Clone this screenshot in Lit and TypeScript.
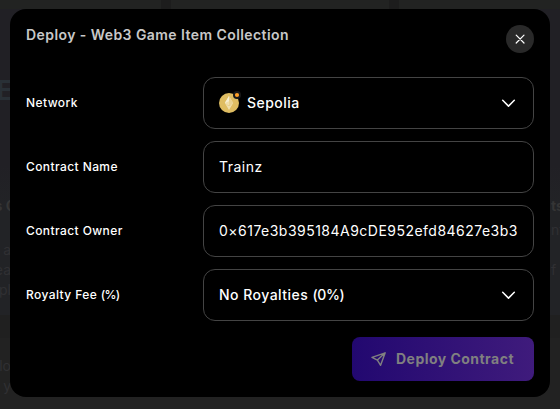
import { LitElement, html, css, svg } from "lit";
import { customElement, property } from "lit/decorators.js";

const chevron = svg`<svg width="20" height="20" viewBox="0 0 20 20" fill="none" stroke="#fff" stroke-width="1.5" stroke-linecap="round" stroke-linejoin="round"><path d="M4.7 7.3 10.5 13.1l5.8-5.8"/></svg>`;

/* Sets a trailing "(…)" note slightly tighter than the words before it. */
const withNote = (text: string) => {
  const at = text.indexOf("(");
  return at < 0 ? text : html`${text.slice(0, at)}<span class="note">${text.slice(at)}</span>`;
};

@customElement("form-row")
class FormRow extends LitElement {
  @property() label = "";
  @property() value = "";
  @property() kind = "text";

  static styles = css`
    :host { display: flex; align-items: center; height: 52px; }
    .label { width: 177px; flex: none; font-size: 12px; line-height: 16px; font-weight: 500; letter-spacing: 0.41px; color: #fff; }
    .field {
      flex: 1; min-width: 0; box-sizing: border-box; height: 52px; padding: 0 14px 0 15px;
      border: 1px solid #444; border-radius: 12px;
      display: flex; align-items: center; gap: 8px; color: #fff;
      font-size: 14px; letter-spacing: 0.48px;
    }
    .value { flex: 1; min-width: 0; overflow: hidden; white-space: nowrap; line-height: 20px; }
    .picker { font-weight: 500; padding-right: 15px; }
    .note { letter-spacing: -0.4px; }
    .label .note { letter-spacing: -0.7px; }
    svg { display: block; flex: none; }
  `;

  render() {
    const select = this.kind !== "text";
    return html`
      <span class="label">${withNote(this.label)}</span>
      <div class="field ${select ? "picker" : ""}">
        <slot name="icon"></slot>
        <span class="value">${withNote(this.value)}</span>
        ${select ? chevron : ""}
      </div>`;
  }
}

@customElement("app-root")
class AppRoot extends LitElement {
  static styles = css`
    :host {
      display: block; position: relative; width: 560px; height: 409px; overflow: hidden;
      box-sizing: border-box; padding: 9px 10px 12px;
      background: #222; font-family: Inter, sans-serif;
    }
    .backdrop { position: absolute; inset: 0; background: linear-gradient(#222322 0 9px, #212025 9px 165px, #222326 205px 315px, #202020 315px 338px, #222 338px); }
    .band { position: absolute; top: 0; width: 10px; height: 9px; background: #1d1d1d; }
    .band-a { left: 161px; }
    .band-b { left: 389px; }
    .ghost { position: absolute; white-space: nowrap; line-height: 20px; font-size: 14px; color: #303033; }
    .left { right: 549px; }
    .right { left: 551px; }
    .big { right: 547px; font-size: 27px; font-weight: 600; color: #293036; line-height: 30px; }
    .bold { font-weight: 700; color: #353535; }
    .left.bold { right: 544px; }
    .modal {
      position: relative; box-sizing: border-box; height: 388px; padding: 16px;
      background: #000; border-radius: 16px; display: flex; flex-direction: column;
    }
    .head { display: flex; justify-content: space-between; height: 28px; margin-bottom: 24px; }
    .title { margin: 0; font-size: 14px; line-height: 20px; font-weight: 600; letter-spacing: 0.43px; color: #c8c8c8; }
    .close {
      width: 28px; height: 28px; padding: 0; border: 0; border-radius: 50%;
      background: #292929; display: grid; place-items: center;
    }
    .rows { display: flex; flex-direction: column; gap: 12px; }
    .deploy {
      align-self: flex-end; margin-top: 16px; width: 182px; height: 44px; flex: none;
      border: 0; border-radius: 8px; padding: 0 0 0 19px;
      display: flex; align-items: center; gap: 9px;
      background: linear-gradient(90deg, #220870, #3f1b7c); color: #808080;
      font: 700 14px/20px Inter, sans-serif; letter-spacing: 0.47px;
    }
    svg { display: block; flex: none; }
    .coin { width: 20px; height: 20px; overflow: visible; }
  `;

  render() {
    return html`
      <div class="backdrop">
        <div class="band band-a"></div>
        <div class="band band-b"></div>
        <span class="ghost left big" style="top:76px">E</span>
        <span class="ghost left bold" style="top:196px">s C</span>
        <span class="ghost left" style="top:240px">a</span>
        <span class="ghost left" style="top:260px">ea</span>
        <span class="ghost left" style="top:280px">pl</span>
        <span class="ghost left" style="top:356px">lo</span>
        <span class="ghost left" style="top:376px">y</span>
        <span class="ghost right bold" style="top:196px">ts</span>
        <span class="ghost right" style="top:220px">nt</span>
        <span class="ghost right" style="top:260px">f</span>
      </div>
      <section class="modal">
        <header class="head">
          <h2 class="title">Deploy - Web3 Game Item Collection</h2>
          <button class="close" aria-label="Close">
            <svg width="10" height="10" viewBox="0 0 10 10" stroke="#fff" stroke-width="1.2" stroke-linecap="round"><path d="m1.2 1.2 7.8 7.8M9 1.2 1.2 9"/></svg>
          </button>
        </header>
        <div class="rows">
          <form-row label="Network" value="Sepolia" kind="select">
            <svg slot="icon" class="coin" viewBox="0 0 20 20">
              <circle cx="10" cy="10" r="10" fill="#dfbd62"/>
              <path d="M10 3 5.8 10.1 10 17l4.2-6.9z" fill="#f0dfad"/>
              <path d="M10 3v9.4l4.2-2.3z" fill="#e9d291"/>
              <path d="M10 3 5.8 10.1 10 8.3z" fill="#f8efd2"/>
              <path d="m5.8 10.8 4.2 2.3 4.2-2.3L10 12.4z" fill="#dfbd62"/>
              <circle cx="18" cy="2" r="4" fill="#191919"/>
              <circle cx="18" cy="2" r="2.1" fill="#ff9f27"/>
            </svg>
          </form-row>
          <form-row label="Contract Name" value="Trainz"></form-row>
          <form-row label="Contract Owner" value="0×617e3b395184A9cDE952efd84627e3b3"></form-row>
          <form-row label="Royalty Fee (%)" value="No Royalties (0%)" kind="select"></form-row>
        </div>
        <button class="deploy">
          <svg width="16" height="16" viewBox="0 0 16 16" fill="none" stroke="#808080" stroke-width="1.4" stroke-linejoin="round"><path d="M14.2 1.8 1 6.4l5.4 2.7 3.2 5.2zM14.2 1.8 6.4 9.1"/></svg>
          <span>Deploy Contract</span>
        </button>
      </section>`;
  }
}
